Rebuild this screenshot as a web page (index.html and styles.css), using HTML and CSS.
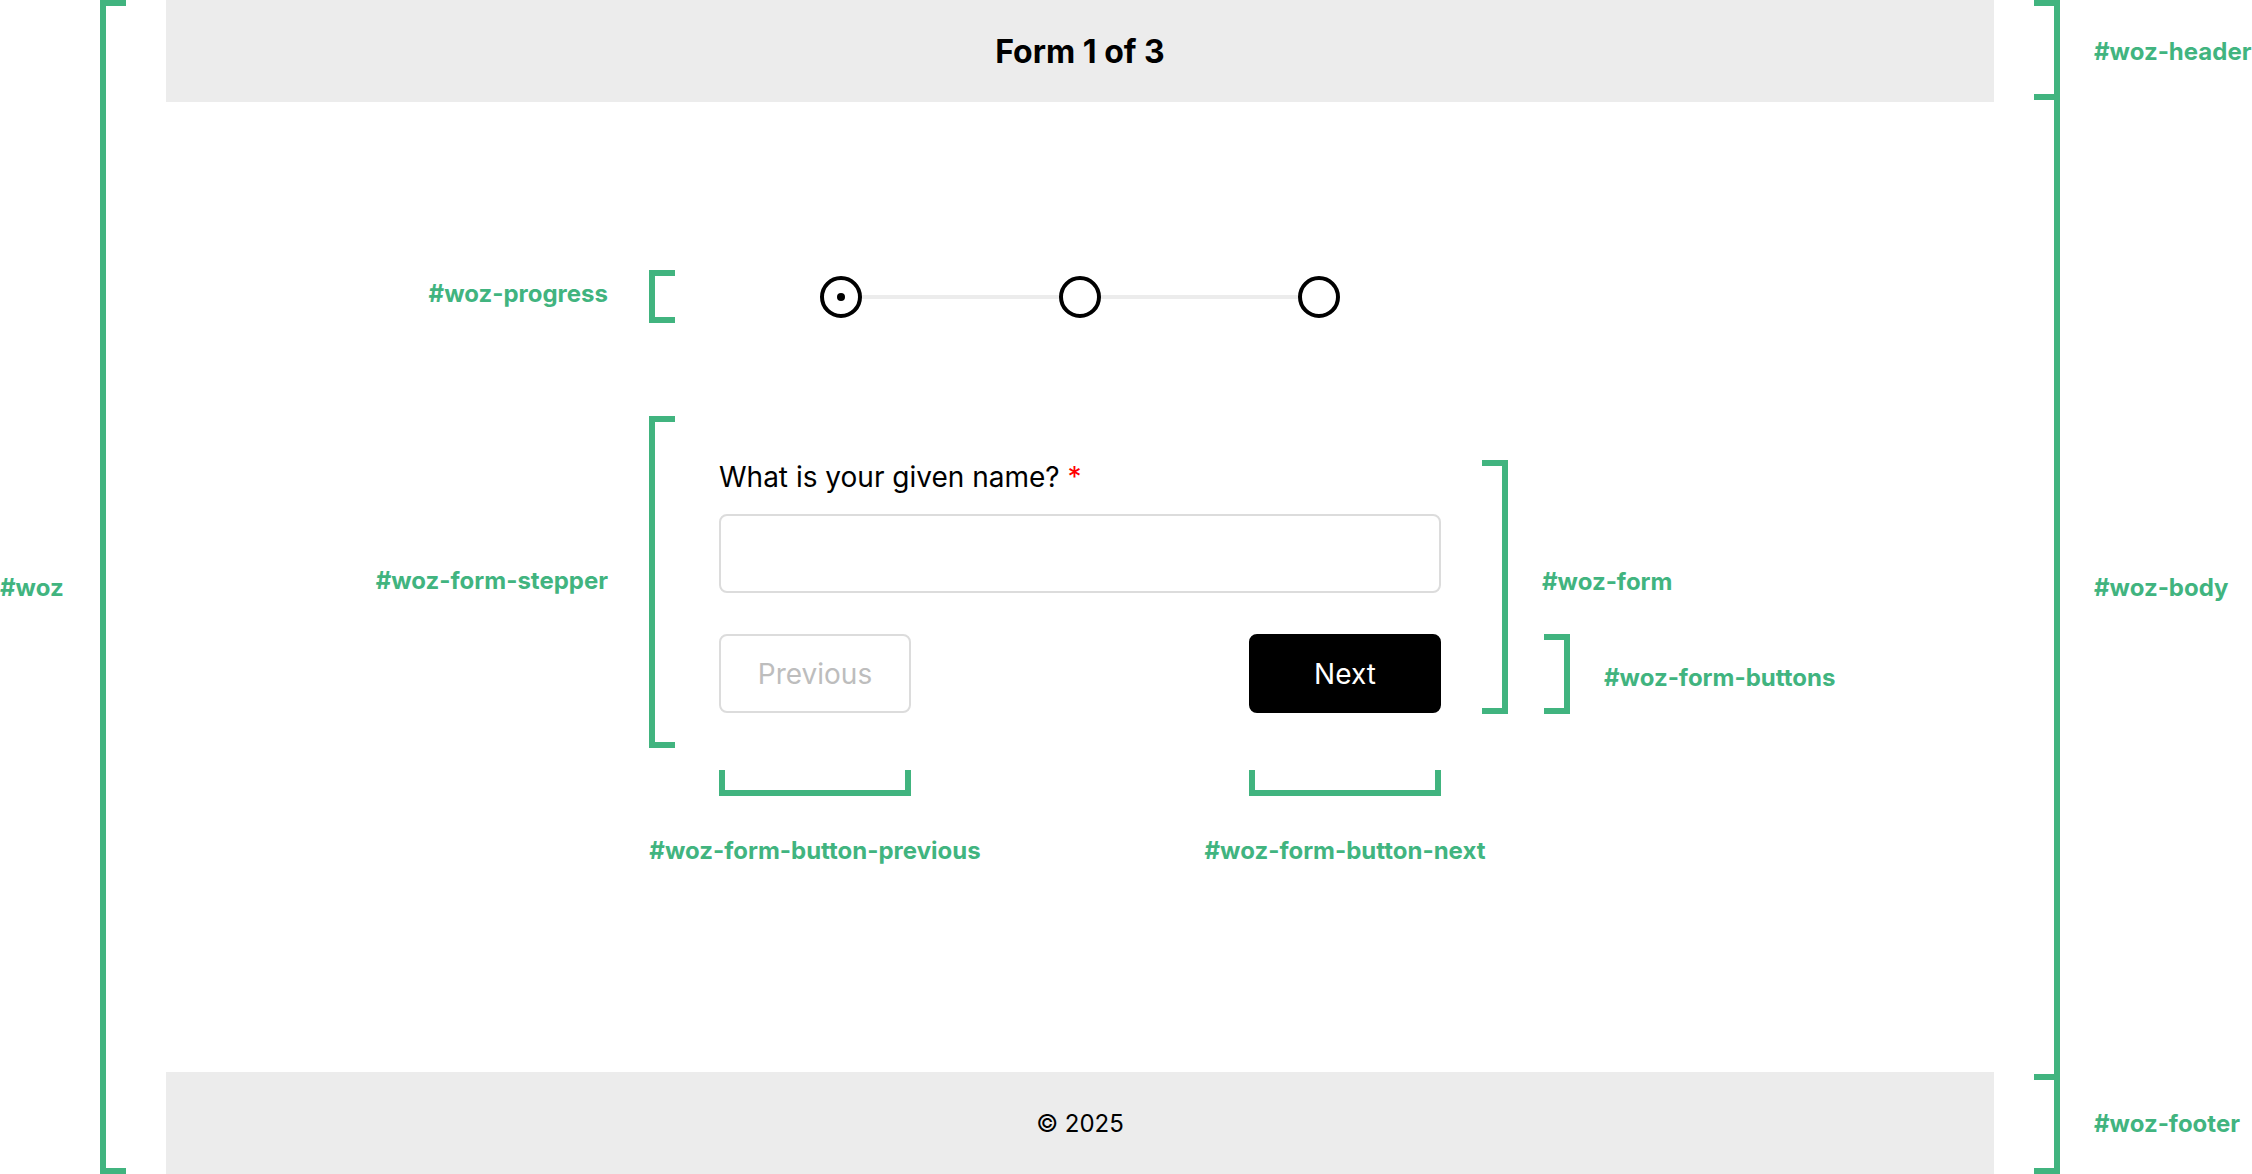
FILE: index.html
```html
<!DOCTYPE html>
<html lang="en">
<head>
    <meta charset="UTF-8">
    <meta name="viewport" content="width=device-width, initial-scale=1.0">
    <title>Form 1 of 3</title>
    <link rel="stylesheet" href="styles.css">
</head>
<body>
    <div class="woz">
        <aside class="gutter gutter-left">
            <span class="note">#woz</span>
            <span class="bracket bracket-open"></span>
        </aside>

        <header class="woz-header">
            <h1>Form 1 of 3</h1>
        </header>
        <div class="gutter gutter-right row-header">
            <span class="bracket bracket-close"></span>
            <span class="note">#woz-header</span>
        </div>

        <main class="woz-body">
            <div class="progress">
                <div class="anno anno-left">
                    <span class="note note-progress">#woz-progress</span>
                    <span class="bracket bracket-open"></span>
                </div>
                <span class="step step-current"></span>
                <span class="step-line"></span>
                <span class="step"></span>
                <span class="step-line"></span>
                <span class="step"></span>
            </div>

            <div class="stepper">
                <div class="anno anno-left">
                    <span class="note note-stepper">#woz-form-stepper</span>
                    <span class="bracket bracket-open"></span>
                </div>

                <form class="form">
                    <div class="anno anno-right">
                        <span class="bracket bracket-close"></span>
                        <span class="note note-form">#woz-form</span>
                    </div>

                    <label for="givenName">What is your given name? <span class="required">*</span></label>
                    <input type="text" id="givenName" name="givenName">

                    <div class="buttons">
                        <div class="anno anno-right">
                            <span class="bracket bracket-close"></span>
                            <span class="note note-buttons">#woz-form-buttons</span>
                        </div>

                        <div class="button-slot">
                            <button type="button" class="btn btn-previous" disabled>Previous</button>
                            <div class="anno anno-below">
                                <span class="bracket bracket-cup"></span>
                                <span class="note">#woz-form-button-previous</span>
                            </div>
                        </div>
                        <div class="button-slot">
                            <button type="button" class="btn btn-next">Next</button>
                            <div class="anno anno-below">
                                <span class="bracket bracket-cup"></span>
                                <span class="note">#woz-form-button-next</span>
                            </div>
                        </div>
                    </div>
                </form>
            </div>
        </main>
        <div class="gutter gutter-right row-body">
            <span class="bracket bracket-close"></span>
            <span class="note">#woz-body</span>
        </div>

        <footer class="woz-footer">
            <p>&copy; 2025</p>
        </footer>
        <div class="gutter gutter-right row-footer">
            <span class="bracket bracket-close"></span>
            <span class="note">#woz-footer</span>
        </div>
    </div>
</body>
</html>
```

FILE: styles.css
```css
body {
    margin: 0;
    font-family: Inter, "Liberation Sans", sans-serif;
    color: #000;
    background-color: #fff;
}

.woz {
    display: grid;
    grid-template-columns: 166px 1828px 1fr;
    grid-template-rows: 102px 1fr 102px;
    height: 100vh;
    overflow: hidden;
}

/* annotation pieces */
.note {
    font-size: 24px;
    line-height: 29px;
    font-weight: 700;
    color: #41b47f;
    white-space: nowrap;
}

.bracket {
    box-sizing: border-box;
    width: 26px;
    border: 6px solid #41b47f;
}

.bracket-open {
    border-right: 0;
}

.bracket-close {
    border-left: 0;
}

.bracket-cup {
    width: 100%;
    height: 26px;
    border-top: 0;
}

.gutter {
    display: flex;
    align-items: center;
}

.gutter .bracket {
    align-self: stretch;
}

.gutter-left {
    grid-column: 1;
    grid-row: 1 / 4;
}

.gutter-left .note {
    width: 100px;
}

.gutter-right {
    grid-column: 3;
    padding-left: 40px;
}

.gutter-right .note {
    margin-left: 34px;
}

.row-header {
    grid-row: 1;
}

.row-header .bracket {
    margin-bottom: 2px;
}

.row-body {
    grid-row: 2;
}

.row-body .bracket {
    margin: -8px 0;
}

.row-footer {
    grid-row: 3;
}

.row-footer .bracket {
    margin-top: 2px;
}

.anno {
    position: absolute;
    display: flex;
    align-items: center;
}

.anno .bracket {
    align-self: stretch;
}

.anno-left {
    right: calc(100% + 44px);
    top: 0;
    bottom: 0;
}

.anno-left .note {
    margin-right: 41px;
}

.anno-right {
    left: calc(100% + 41px);
    top: 0;
    bottom: -1px;
}

.buttons .anno-right {
    left: calc(100% + 103px);
}

.anno-right .note {
    margin-left: 34px;
}

.note-progress {
    margin-bottom: 6px;
}

.note-stepper {
    margin-bottom: 3px;
}

.note-form {
    margin-bottom: 12px;
}

.note-buttons {
    margin-top: 6px;
}

.anno-below {
    top: calc(100% + 57px);
    left: 0;
    right: 0;
    flex-direction: column;
}

.anno-below .bracket {
    align-self: auto;
}

.anno-below .note {
    margin-top: 40px;
}

/* page */
.woz-header,
.woz-footer {
    background-color: #ececec;
    display: flex;
    justify-content: center;
    align-items: center;
}

.woz-header {
    grid-column: 2;
    grid-row: 1;
}

.woz-header h1 {
    margin: 0;
    font-size: 32px;
    font-weight: 700;
}

.woz-footer {
    grid-column: 2;
    grid-row: 3;
}

.woz-footer p {
    margin: 0;
    font-size: 24px;
}

.woz-body {
    grid-column: 2;
    grid-row: 2;
    display: flex;
    flex-direction: column;
    align-items: center;
}

.progress {
    position: relative;
    width: 722px;
    height: 53px;
    margin-top: 168px;
    display: flex;
    justify-content: center;
    align-items: center;
}

.step {
    box-sizing: border-box;
    width: 42px;
    height: 42px;
    border: 4px solid #000;
    border-radius: 50%;
    display: flex;
    justify-content: center;
    align-items: center;
}

.step-current::after {
    content: "";
    width: 8px;
    height: 8px;
    border-radius: 50%;
    background-color: #000;
}

.step-line {
    width: 197px;
    height: 4px;
    background-color: #ececec;
}

.stepper {
    position: relative;
    width: 722px;
    margin-top: 93px;
    padding: 44px 0 35px;
}

.form {
    position: relative;
    display: flex;
    flex-direction: column;
    margin: 0;
}

.form label {
    font-size: 28px;
    line-height: 34px;
    margin-bottom: 20px;
}

.required {
    color: #f00;
}

.form input {
    box-sizing: border-box;
    width: 100%;
    height: 79px;
    padding: 0 20px;
    border: 2px solid #dcdcdc;
    border-radius: 8px;
    font-family: inherit;
    font-size: 28px;
}

.buttons {
    position: relative;
    display: flex;
    justify-content: space-between;
    margin-top: 41px;
}

.button-slot {
    position: relative;
}

.btn {
    box-sizing: border-box;
    width: 192px;
    height: 79px;
    padding-top: 2px;
    border-radius: 8px;
    font-family: inherit;
    font-size: 28px;
    cursor: pointer;
}

.btn-previous {
    background-color: #fff;
    border: 2px solid #dcdcdc;
    color: #bdbdbd;
    cursor: default;
}

.btn-next {
    background-color: #000;
    border: 2px solid #000;
    color: #fff;
}
```
